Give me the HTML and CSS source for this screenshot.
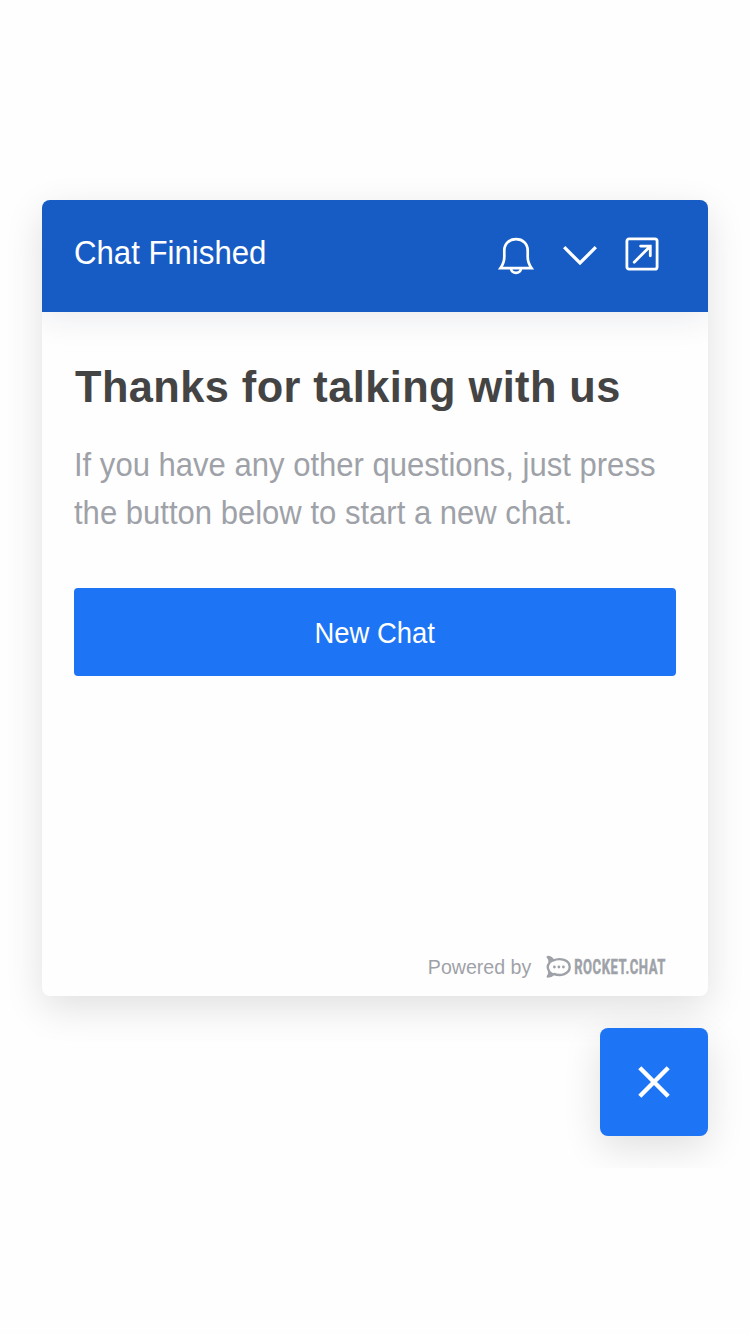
FILE: index.html
```html
<!DOCTYPE html>
<html lang="en">
<head>
<meta charset="utf-8">
<title>Chat Finished</title>
<link rel="stylesheet" href="styles.css">
</head>
<body>
<main class="livechat">
  <section class="card">
    <header class="header">
      <div class="header-title">Chat Finished</div>
      <nav class="actions">
        <svg class="bell" width="36" height="38" viewBox="0 0 36 38" fill="none" stroke="#fff" stroke-width="2.7"><path d="M2.4 31.2C5.8 26.5 6.3 24 6.3 20V13.5C6.3 6.5 11.3 2.2 18 2.2S29.7 6.5 29.7 13.5V20C29.7 24 30.2 26.5 33.6 31.2Z"/><path d="M13 31.2C13.2 37.3 22.8 37.3 23 31.2"/></svg>
        <svg class="chevron" width="34" height="22" viewBox="0 0 34 22" fill="none" stroke="#fff" stroke-width="3.3"><path d="M1.2 2.2 17 18 32.8 2.2"/></svg>
        <svg class="expand" width="34" height="34" viewBox="0 0 34 34" fill="none" stroke="#fff" stroke-width="2.8"><rect x="1.9" y="1.9" width="30.2" height="30.2" rx="2.2"/><path stroke-linecap="round" d="M9.2 25.2 25 9.4M15.6 9.1H25.3V18.8"/></svg>
      </nav>
    </header>
    <div class="content">
      <h1 class="title">Thanks for talking with us</h1>
      <p class="message">If you have any other questions, just press<br>the button below to start a new chat.</p>
      <button class="new-chat" type="button"><span class="new-chat-label">New Chat</span></button>
    </div>
    <footer class="footer">
      <span class="powered">Powered by</span>
      <div class="logo">
        <svg width="26" height="24" viewBox="0 0 26 24">
          <path fill="none" stroke="#9ea2a8" stroke-width="2.4" stroke-linejoin="round" d="M7.2 5.5C14 2.3 23.7 5 23.7 12S14.5 21.4 8 19C6.3 20.7 4.1 21.6 1.8 21.6C3.4 19.6 3.7 17.5 2.8 15.5C1.5 13.2 1.5 10.3 3.2 8.2C3.9 6 3.2 3.3 1.8 2C4.5 2.1 6.2 3.4 7.2 5.5Z"/>
          <path fill="#9ea2a8" d="M1.8 2C5 2 6.7 4 7.7 6L3 9C4 6 3.5 4 1.8 2ZM1.8 21.6C3.7 19.6 3.6 17.6 2.8 15.2L8 18.8C6.3 20.7 4.3 21.7 1.8 21.6Z"/>
          <g fill="#9ea2a8"><circle cx="8.4" cy="12" r="1.4"/><circle cx="12.9" cy="12" r="1.4"/><circle cx="17.4" cy="12" r="1.4"/></g>
        </svg>
        <div class="wordmark"><span>ROCKET.CHAT</span></div>
      </div>
    </footer>
  </section>
  <div class="launcher-area">
    <button class="launcher" type="button" aria-label="Close chat">
      <svg width="32" height="32" viewBox="0 0 32 32" fill="none" stroke="#fff" stroke-width="4.4"><path d="M1.8 1.8 30.2 30.2M30.2 1.8 1.8 30.2"/></svg>
    </button>
  </div>
</main>
</body>
</html>
```
FILE: styles.css
```css
* { box-sizing: border-box; }
body {
  margin: 0;
  background: #fefefe;
  font-family: "Liberation Sans", Arial, sans-serif;
}
.livechat {
  height: 1168px;
  padding: 200px 42px 32px;
  overflow: hidden;
  display: flex;
  flex-direction: column;
  gap: 32px;
}
.card {
  height: 796px;
  display: flex;
  flex-direction: column;
  border-radius: 8px;
  overflow: hidden;
  background: #fefefe;
  box-shadow: 0 12px 38px rgba(0, 0, 0, .12);
}
.header {
  height: 112px;
  padding: 0 49px 4px 32px;
  display: flex;
  align-items: center;
  justify-content: space-between;
  background: #175cc4;
  color: #fff;
  box-shadow: 0 4px 32px rgba(31, 35, 80, .1);
}
.header-title,
.title,
.message,
.powered {
  transform-origin: left center;
  white-space: nowrap;
}
.header-title {
  font-size: 33px;
  line-height: 48px;
  transform: scaleX(.945);
  margin-top: -3px;
}
.actions { display: flex; align-items: center; }
.actions svg { display: block; }
.bell { margin: 3px 29px 0 0; }
.chevron { margin: 4px 28px 0 0; }
.content { padding: 43px 32px 0; }
.title {
  margin: 0 0 22px 1px;
  color: #444;
  font-size: 45px;
  line-height: 64px;
  font-weight: 700;
  letter-spacing: .45px;
  transform: scaleX(.963);
}
.message {
  margin: 0 0 51px;
  color: #9ea2a8;
  font-size: 32.5px;
  line-height: 48px;
  transform: scaleX(.955);
}
.new-chat {
  display: block;
  width: 100%;
  height: 88px;
  padding: 1px 0 0;
  border: 0;
  border-radius: 4px;
  background: #1d74f5;
  color: #fff;
  font: 29px/40px "Liberation Sans", Arial, sans-serif;
}
.new-chat-label { display: inline-block; transform: scaleX(.945); }
.footer {
  margin-top: auto;
  height: 58px;
  padding: 0 42px 0 0;
  display: flex;
  align-items: center;
  justify-content: flex-end;
  gap: 15px;
}
.powered {
  color: #9ea2a8;
  font-size: 20.5px;
  line-height: 24px;
  transform: scaleX(.955);
  transform-origin: right center;
}
.logo { display: flex; align-items: center; gap: 2px; }
.logo svg { display: block; }
.wordmark {
  width: 92px;
  display: flex;
  justify-content: flex-end;
  color: #9ea2a8;
  font: 700 20.5px/24px Roboto, sans-serif;
  white-space: nowrap;
}
.wordmark span {
  transform: scaleX(.637);
  transform-origin: right center;
  letter-spacing: .8px;
  -webkit-text-stroke: .5px #9ea2a8;
}
.launcher-area { display: flex; justify-content: flex-end; }
.launcher {
  width: 108px;
  height: 108px;
  padding: 0;
  border: 0;
  border-radius: 8px;
  display: flex;
  align-items: center;
  justify-content: center;
  background: #1d74f5;
  box-shadow: 0 12px 38px rgba(0, 0, 0, .12);
}
```
